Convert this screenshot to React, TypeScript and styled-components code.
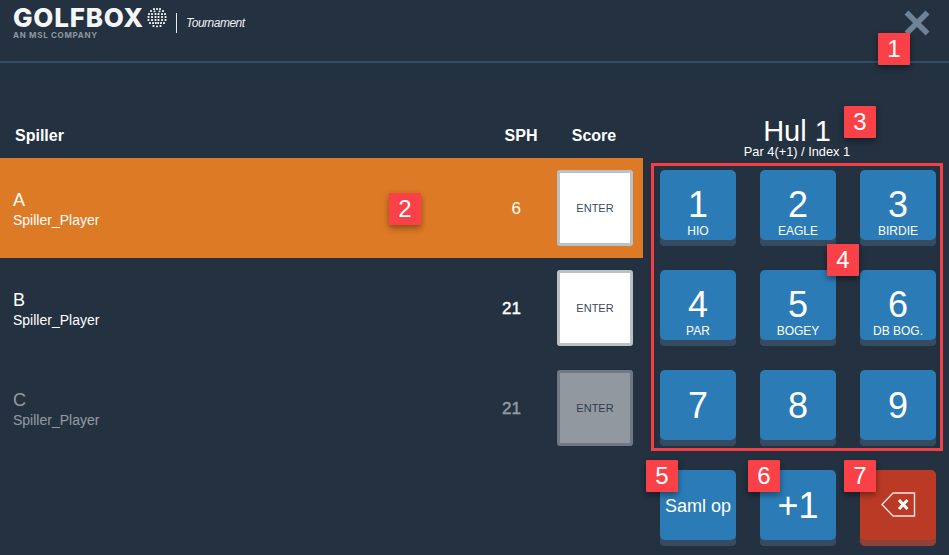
import React from "react";
import styled, { createGlobalStyle } from "styled-components";

const Global = createGlobalStyle`
  html, body { margin: 0; padding: 0; background: #233140; }
  body { font-family: "Liberation Sans", Arial, sans-serif; color: #fff; }
  * { box-sizing: border-box; }
`;

const Page = styled.div`
  position: relative;
  width: 949px;
  height: 555px;
  overflow: hidden;
  background: #233140;
`;

const Header = styled.header`
  height: 63px;
  border-bottom: 2px solid #364d66;
  display: flex;
  justify-content: space-between;
  padding: 7px 13px 0 13px;
`;

const Brand = styled.div`
  display: flex;
  align-items: flex-start;
`;

const LogoBlock = styled.div`
  width: 154px;
  display: flex;
  flex-direction: column;
`;

const LogoTop = styled.div`
  display: flex;
  align-items: flex-start;
  gap: 3px;
  height: 24px;
`;

const Wordmark = styled.span`
  font-family: Inter, "Liberation Sans", sans-serif;
  font-weight: 800;
  font-size: 26px;
  line-height: 22px;
  letter-spacing: 0.8px;
  color: #f4f6f7;
`;

const GlobeWrap = styled.span`
  display: flex;
  margin-top: 1px;
`;

const LogoSub = styled.span`
  font-family: Inter, "Liberation Sans", sans-serif;
  font-size: 8px;
  font-weight: 700;
  letter-spacing: 0.7px;
  line-height: 9px;
  color: #8c96a0;
`;

const Divider = styled.div`
  width: 1px;
  height: 20px;
  margin: 6px 9px 0 9px;
  background: #e8ebee;
`;

const Product = styled.span`
  font-size: 12px;
  font-style: italic;
  line-height: 16px;
  margin-top: 8px;
  letter-spacing: -0.5px;
  color: #eef0f2;
`;

const CloseButton = styled.button`
  border: 0;
  background: none;
  padding: 0;
  width: 26px;
  height: 26px;
  margin: 3px 6px 0 0;
  display: block;
`;

const Main = styled.main`
  display: flex;
`;

const Players = styled.section`
  width: 643px;
  padding-top: 61px;
`;

const HeadRow = styled.div`
  display: flex;
  align-items: center;
  height: 34px;
  padding: 0 0 11px 15px;
  font-size: 16px;
  font-weight: 700;
`;

const HeadName = styled.span`
  flex: 1;
`;

const HeadSph = styled.span`
  width: 52px;
  text-align: center;
  margin-right: 9px;
`;

const HeadScore = styled.span`
  width: 76px;
  margin-right: 11px;
  text-align: center;
`;

const Row = styled.div<{ $active?: boolean; $dim?: boolean }>`
  display: flex;
  align-items: center;
  height: 100px;
  padding-left: 13px;
  background: ${(p) => (p.$active ? "#dd7a26" : "transparent")};
  opacity: ${(p) => (p.$dim ? 0.5 : 1)};
`;

const Name = styled.div`
  flex: 1;
  display: flex;
  flex-direction: column;
  margin-top: 3px;
`;

const Letter = styled.span`
  font-size: 18px;
  line-height: 20px;
`;

const Sub = styled.span`
  font-size: 14px;
  line-height: 18px;
  margin-top: 1px;
`;

const Sph = styled.span<{ $strong?: boolean }>`
  width: 46px;
  text-align: right;
  font-size: 17px;
  -webkit-text-stroke: ${(p) => (p.$strong ? "0.4px" : "0")};
  margin: 2px 36px 0 0;
`;

const Score = styled.div`
  width: 76px;
  height: 76px;
  margin-right: 10px;
  background: #fff;
  border: 3px solid #bcc1c6;
  border-radius: 3px;
  display: flex;
  align-items: center;
  justify-content: center;
  font-size: 11px;
  color: #3a4a5c;
`;

const Pad = styled.section`
  width: 306px;
  display: flex;
  flex-direction: column;
  align-items: flex-start;
  padding: 53px 0 0 8px;
`;

const Title = styled.div`
  width: 292px;
  text-align: center;
  font-size: 29px;
  line-height: 30px;
`;

const Info = styled.div`
  width: 292px;
  text-align: center;
  font-size: 12.8px;
  line-height: 14px;
  margin-top: -1px;
`;

const Frame = styled.div`
  margin-top: 4px;
  width: 292px;
  height: 288px;
  border: 3px solid #f34044;
  padding: 4px 0 0 6px;
  display: grid;
  grid-template-columns: repeat(3, 76px);
  grid-auto-rows: 76px;
  column-gap: 24px;
  row-gap: 24px;
`;

const ActionRow = styled.div`
  margin-top: 19px;
  margin-left: 9px;
  display: grid;
  grid-template-columns: repeat(3, 76px);
  column-gap: 24px;
`;

const Key = styled.button<{ $danger?: boolean }>`
  width: 76px;
  height: 76px;
  padding: 0;
  border: 0;
  border-radius: 5px;
  color: #fff;
  font-family: inherit;
  background: ${(p) => (p.$danger ? "#bb3a26" : "#2b7cb6")};
  box-shadow: inset 0 -6px 0 ${(p) => (p.$danger ? "#8f4038" : "#364a60")};
  display: flex;
  flex-direction: column;
  align-items: center;
  justify-content: flex-start;
`;

const Digit = styled.span<{ $lone?: boolean }>`
  font-size: 36px;
  line-height: 40px;
  margin-top: ${(p) => (p.$lone ? "16px" : "15px")};
`;

const KeyLabel = styled.span`
  font-size: 12px;
  line-height: 14px;
  margin-top: -1px;
`;

const TextKey = styled.span`
  font-size: 18px;
  line-height: 20px;
  margin-top: 26px;
`;

const PlusKey = styled.span`
  font-size: 36px;
  line-height: 40px;
  margin-top: 16px;
`;

const IconWrap = styled.span`
  margin-top: 22px;
  display: flex;
`;

const Badge = styled.div<{ $x: number; $y: number }>`
  position: absolute;
  left: ${(p) => p.$x}px;
  top: ${(p) => p.$y}px;
  width: 32px;
  height: 32px;
  background: #fb4148;
  border-radius: 1px;
  box-shadow: 0 3px 6px rgba(0, 0, 0, 0.4);
  color: #fff;
  font-size: 24px;
  line-height: 32px;
  text-align: center;
`;

const Globe = () => (
  <svg width="20" height="20" viewBox="0 0 20 20" fill="#eef0f2">
    {[
      [7, 1], [10, 1], [13, 1],
      [4, 3], [7.5, 3.4], [12.5, 3.4], [16, 3],
      [2, 6], [5, 6], [8.5, 6], [11.5, 6], [15, 6], [18, 6],
      [1.5, 9], [5, 9], [8.5, 9], [11.5, 9], [15, 9], [18.5, 9],
      [1.5, 12], [5, 12], [8.5, 12], [11.5, 12], [15, 12], [18.5, 12],
      [3, 15], [6, 15], [8.8, 15], [11.2, 15], [14, 15], [17, 15],
      [6.5, 18], [10, 18.4], [13.5, 18],
    ].map(([x, y], i) => (
      <rect key={i} x={x - 0.95} y={y - 0.95} width="1.9" height="1.9" rx="0.5" />
    ))}
  </svg>
);

const CloseIcon = () => (
  <svg width="26" height="26" viewBox="0 0 26 26">
    <path d="M2.5 2.5 L23.5 23.5 M23.5 2.5 L2.5 23.5" stroke="#6f8398" strokeWidth="5.5" fill="none" />
  </svg>
);

const BackspaceIcon = () => (
  <svg width="35" height="25" viewBox="0 0 35 25" fill="none">
    <path d="M33.5 1 H12 L1 12.5 L12 24 H33.5 Z" stroke="#f3e6e3" strokeWidth="1.4" />
    <path d="M18 8 L26.5 17 M26.5 8 L18 17" stroke="#fff" strokeWidth="3" />
  </svg>
);

const players = [
  { letter: "A", sph: "6", active: true },
  { letter: "B", sph: "21", strong: true },
  { letter: "C", sph: "21", dim: true, strong: true },
];

const keys = [
  ["1", "HIO"], ["2", "EAGLE"], ["3", "BIRDIE"],
  ["4", "PAR"], ["5", "BOGEY"], ["6", "DB BOG."],
  ["7", ""], ["8", ""], ["9", ""],
];

const badges = [
  [878, 33, "1"], [389, 193, "2"], [844, 106, "3"], [827, 244, "4"],
  [646, 460, "5"], [748, 460, "6"], [844, 460, "7"],
] as const;

export default function App() {
  return (
    <Page>
      <Global />
      <Header>
        <Brand>
          <LogoBlock>
            <LogoTop>
              <Wordmark>GOLFBOX</Wordmark>
              <GlobeWrap>
                <Globe />
              </GlobeWrap>
            </LogoTop>
            <LogoSub>AN MSL COMPANY</LogoSub>
          </LogoBlock>
          <Divider />
          <Product>Tournament</Product>
        </Brand>
        <CloseButton aria-label="Luk">
          <CloseIcon />
        </CloseButton>
      </Header>
      <Main>
        <Players>
          <HeadRow>
            <HeadName>Spiller</HeadName>
            <HeadSph>SPH</HeadSph>
            <HeadScore>Score</HeadScore>
          </HeadRow>
          {players.map((p) => (
            <Row key={p.letter} $active={p.active} $dim={p.dim}>
              <Name>
                <Letter>{p.letter}</Letter>
                <Sub>Spiller_Player</Sub>
              </Name>
              <Sph $strong={p.strong}>{p.sph}</Sph>
              <Score>ENTER</Score>
            </Row>
          ))}
        </Players>
        <Pad>
          <Title>Hul 1</Title>
          <Info>Par 4(+1) / Index 1</Info>
          <Frame>
            {keys.map(([d, l]) => (
              <Key key={d}>
                <Digit $lone={!l}>{d}</Digit>
                {l && <KeyLabel>{l}</KeyLabel>}
              </Key>
            ))}
          </Frame>
          <ActionRow>
            <Key>
              <TextKey>Saml op</TextKey>
            </Key>
            <Key>
              <PlusKey>+1</PlusKey>
            </Key>
            <Key $danger>
              <IconWrap>
                <BackspaceIcon />
              </IconWrap>
            </Key>
          </ActionRow>
        </Pad>
      </Main>
      {badges.map(([x, y, t]) => (
        <Badge key={t} $x={x} $y={y}>
          {t}
        </Badge>
      ))}
    </Page>
  );
}
